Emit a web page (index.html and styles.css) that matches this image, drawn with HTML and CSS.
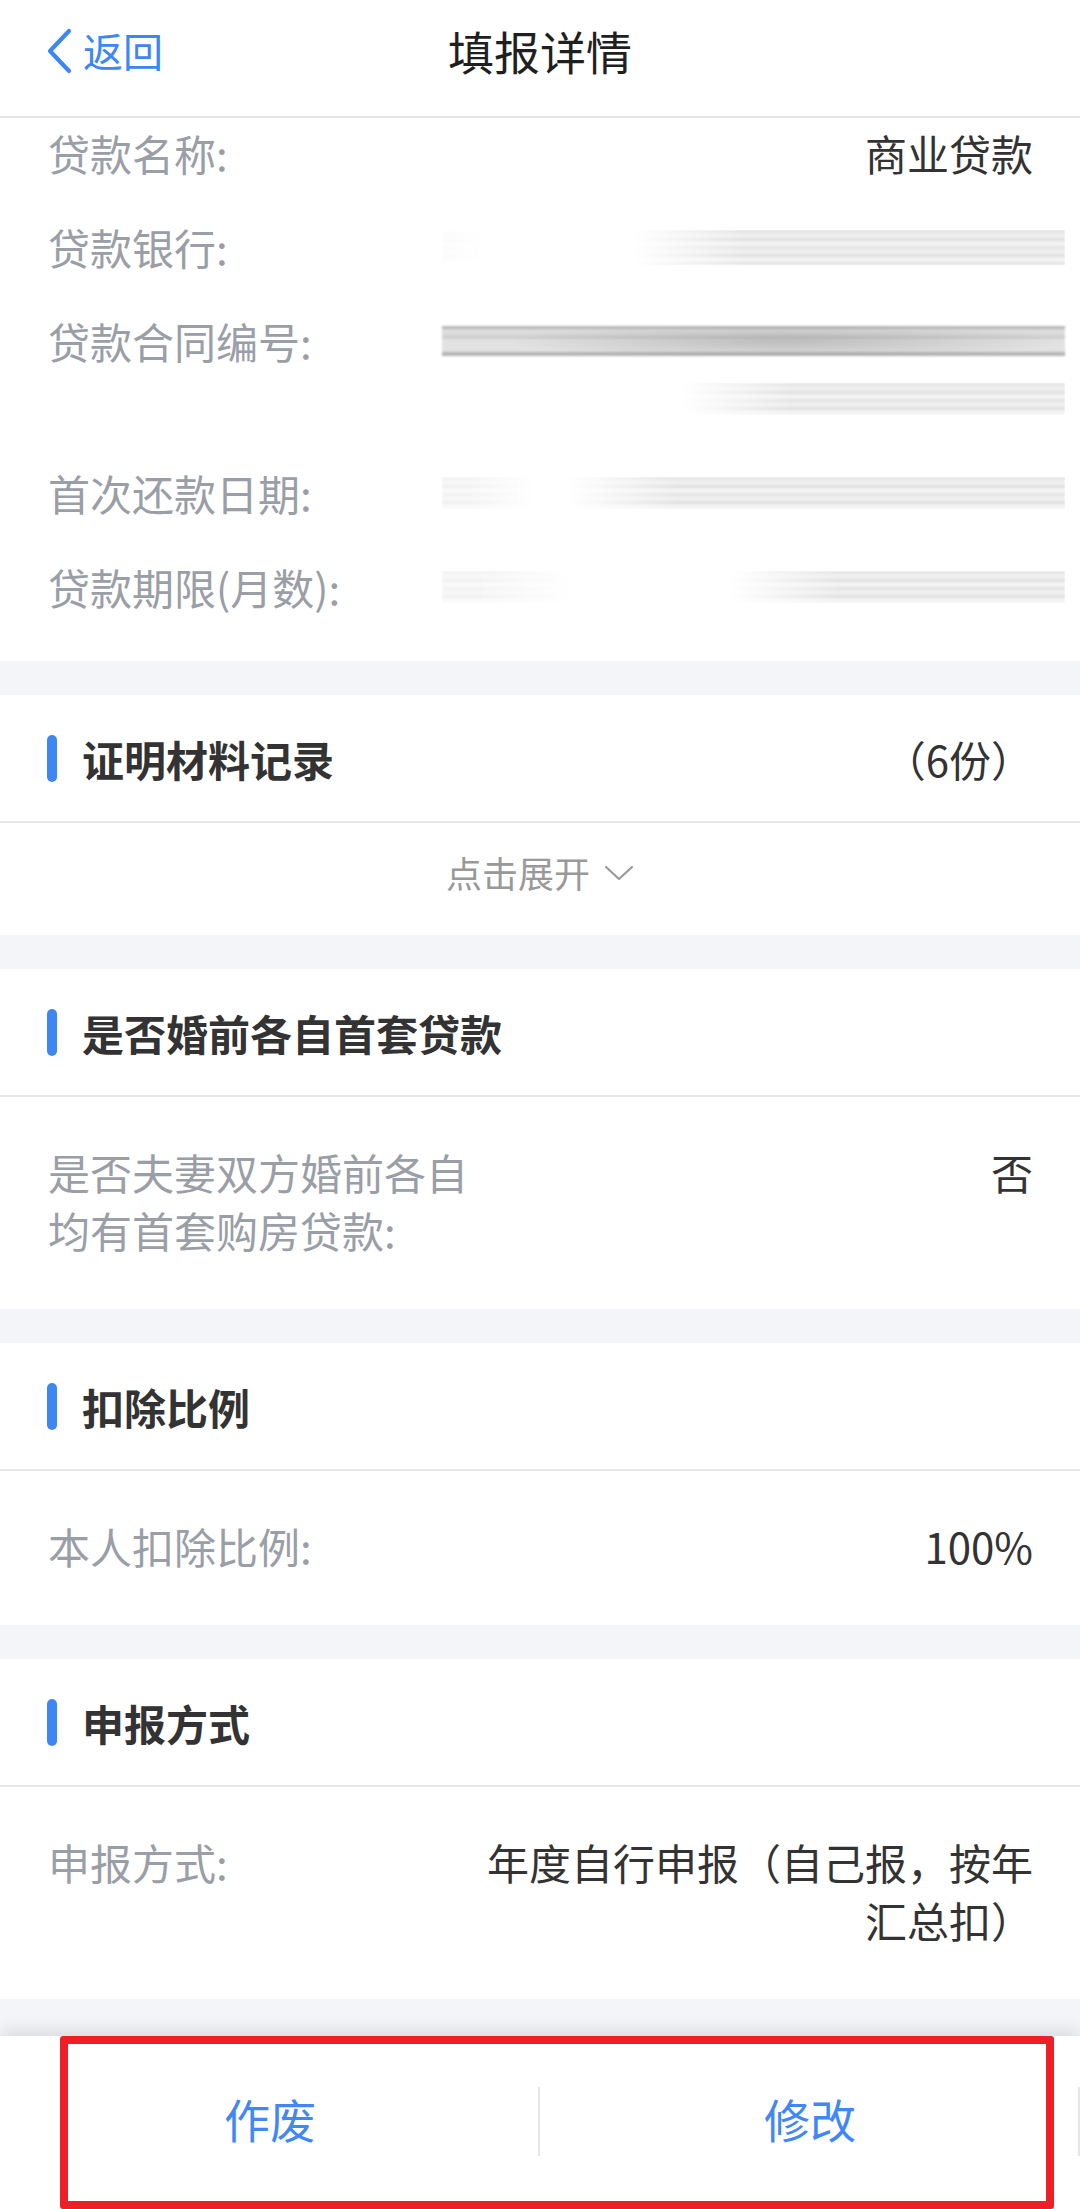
FILE: index.html
```html
<!DOCTYPE html>
<html lang="zh-CN">
<head>
<meta charset="utf-8">
<title>填报详情</title>
<link rel="stylesheet" href="styles.css">
</head>
<body>
<div class="page">
  <header class="topbar">
    <div class="back">
      <svg class="back-icon" width="28" height="46" viewBox="0 0 28 46"><path d="M24 3 L5 23 L24 43" fill="none" stroke="#3d86f5" stroke-width="4.2" stroke-linecap="round" stroke-linejoin="round"/></svg>
      <span>返回</span>
    </div>
    <div class="title">填报详情</div>
    <div></div>
  </header>

  <section class="card loan">
    <div class="row">
      <div class="label">贷款名称:</div>
      <div class="val">商业贷款</div>
    </div>
    <div class="row">
      <div class="label">贷款银行:</div>
      <div class="val smears">
        <div class="line"><span class="smear faint s-speck"></span><span class="smear s-bank"></span></div>
      </div>
    </div>
    <div class="row">
      <div class="label">贷款合同编号:</div>
      <div class="val smears">
        <div class="line"><span></span><span class="smear dark s-contract"></span></div>
        <div class="line"><span></span><span class="smear s-contract2"></span></div>
      </div>
    </div>
    <div class="row">
      <div class="label">首次还款日期:</div>
      <div class="val smears">
        <div class="line"><span class="smear faint s-date-a"></span><span class="smear s-date"></span></div>
      </div>
    </div>
    <div class="row">
      <div class="label">贷款期限(月数):</div>
      <div class="val smears">
        <div class="line"><span class="smear faint s-term-a"></span><span class="smear s-term"></span></div>
      </div>
    </div>
  </section>

  <section class="card">
    <div class="sec-title">
      <i class="mark"></i><span class="sec-name">证明材料记录</span><span class="sec-extra">（6份）</span>
    </div>
    <div class="expand">
      <span>点击展开</span>
      <svg width="30" height="16" viewBox="0 0 30 16"><polyline points="2,2 15,14 28,2" fill="none" stroke="#9a9a9a" stroke-width="2.2" stroke-linecap="round" stroke-linejoin="round"/></svg>
    </div>
  </section>

  <section class="card">
    <div class="sec-title"><i class="mark"></i><span class="sec-name">是否婚前各自首套贷款</span></div>
    <div class="body">
      <div class="row wide">
        <div class="label">是否夫妻双方婚前各自均有首套购房贷款:</div>
        <div class="val">否</div>
      </div>
    </div>
  </section>

  <section class="card">
    <div class="sec-title"><i class="mark"></i><span class="sec-name">扣除比例</span></div>
    <div class="body">
      <div class="row wide">
        <div class="label">本人扣除比例:</div>
        <div class="val">100%</div>
      </div>
    </div>
  </section>

  <section class="card">
    <div class="sec-title"><i class="mark"></i><span class="sec-name">申报方式</span></div>
    <div class="body">
      <div class="row wide">
        <div class="label">申报方式:</div>
        <div class="val">年度自行申报（自己报，按年汇总扣）</div>
      </div>
    </div>
  </section>

  <footer class="actions">
    <div class="btn">作废</div>
    <div class="btn">修改</div>
    <div class="annot"></div>
  </footer>
</div>
</body>
</html>
```

FILE: styles.css
```css
* { box-sizing: border-box; }
html, body { margin: 0; padding: 0; }
body {
  background: #f4f5f8;
  font-family: "Noto Sans CJK SC", "Noto Sans", sans-serif;
  color: #333;
}
.page {
  width: 1080px;
  height: 2209px;
  overflow: hidden;
  display: flex;
  flex-direction: column;
}

/* header */
.topbar {
  height: 118px;
  flex: none;
  background: #fff;
  border-bottom: 2px solid #e3e3e8;
  display: grid;
  grid-template-columns: 1fr auto 1fr;
  align-items: center;
  padding: 0 45px 16px 45px;
}
.back {
  display: flex;
  align-items: center;
  gap: 10px;
  color: #3d86f5;
  font-size: 40px;
  line-height: 46px;
}
.back-icon { display: block; margin-top: 2px; }
.title {
  font-size: 46px;
  color: #1f1f1f;
  line-height: 60px;
}

.card {
  background: #fff;
  flex: none;
  margin-bottom: 34px;
}

/* rows */
.row {
  display: flex;
  padding: 18px 47px 18px 48px;
  font-size: 42px;
  line-height: 58px;
}
.label {
  color: #9a9ea7;
  width: 430px;
  flex: none;
}
.val {
  flex: 1;
  text-align: right;
  color: #333;
}
.loan { padding-bottom: 27px; }
.loan .row:first-child { padding-top: 6px; }
.loan .label { width: 394px; }
.smears { margin-right: -32px; display: flex; flex-direction: column; }
.line {
  height: 58px;
  display: flex;
  align-items: center;
  justify-content: space-between;
}
.smear {
  display: block;
  height: 32px;
  background: repeating-linear-gradient(to bottom, #e4e4e4 0 3px, #efefef 3px 8px, #e0e0e0 8px 11px, #f3f3f3 11px 16px);
  -webkit-mask-image: linear-gradient(to right, transparent 0, #000 110px);
  mask-image: linear-gradient(to right, transparent 0, #000 110px);
  filter: blur(1.2px);
}
.smear.faint {
  opacity: 0.45;
  -webkit-mask-image: linear-gradient(to right, #000 30%, transparent 100%);
  mask-image: linear-gradient(to right, #000 30%, transparent 100%);
}
.smear.dark {
  height: 30px;
  background:
    radial-gradient(ellipse 45% 60% at 55% 50%, rgba(120,120,120,0.35), rgba(120,120,120,0) 100%),
    repeating-linear-gradient(to bottom, #b9b9b9 0 3px, #dcdcdc 3px 9px, #d0d0d0 9px 13px, #e2e2e2 13px 26px, #b5b5b5 26px 30px);
  -webkit-mask-image: none;
  mask-image: none;
}
.s-speck { width: 40px; opacity: 0.12 !important; }
.s-bank { width: 432px; height: 35px; }
.s-contract { width: 623px; }
.s-contract2 { width: 384px; }
.s-date-a { width: 92px; }
.s-date { width: 498px; }
.s-term-a { width: 129px; }
.s-term { width: 336px; }

/* section titles */
.sec-title {
  height: 128px;
  border-bottom: 2px solid #e6e6ea;
  display: flex;
  align-items: center;
  padding: 0 47px;
}
.mark {
  display: block;
  width: 10px;
  height: 47px;
  border-radius: 5px;
  background: #3f86f5;
  margin-right: 25px;
}
.sec-name {
  font-size: 42px;
  font-weight: 700;
  color: #333;
  flex: 1;
}
.sec-extra {
  font-size: 42px;
  color: #333;
}

.expand {
  height: 112px;
  display: flex;
  align-items: center;
  justify-content: center;
  gap: 14px;
  padding-bottom: 14px;
  font-size: 36px;
  color: #999;
}
.expand svg { display: block; margin-top: 2px; }

.body { padding: 46px 0 50px; }
.body .row { padding-top: 0; padding-bottom: 0; }

/* bottom actions */
.actions {
  margin-top: 3px;
  flex: 1;
  background: #fff;
  display: flex;
  position: relative;
  box-shadow: 0 -6px 16px rgba(0, 0, 0, 0.10);
}
.btn {
  flex: 1;
  display: flex;
  align-items: center;
  justify-content: center;
  font-size: 46px;
  color: #4187f5;
  position: relative;
  padding-bottom: 10px;
}
.btn::after {
  content: "";
  position: absolute;
  right: 0;
  top: 51px;
  width: 2px;
  height: 69px;
  background: #e6e6e6;
}
.annot {
  position: absolute;
  left: 60px;
  top: 0;
  width: 994px;
  height: 173px;
  border: 8.5px solid #ee1f26;
  border-radius: 3px;
  pointer-events: none;
}
```
